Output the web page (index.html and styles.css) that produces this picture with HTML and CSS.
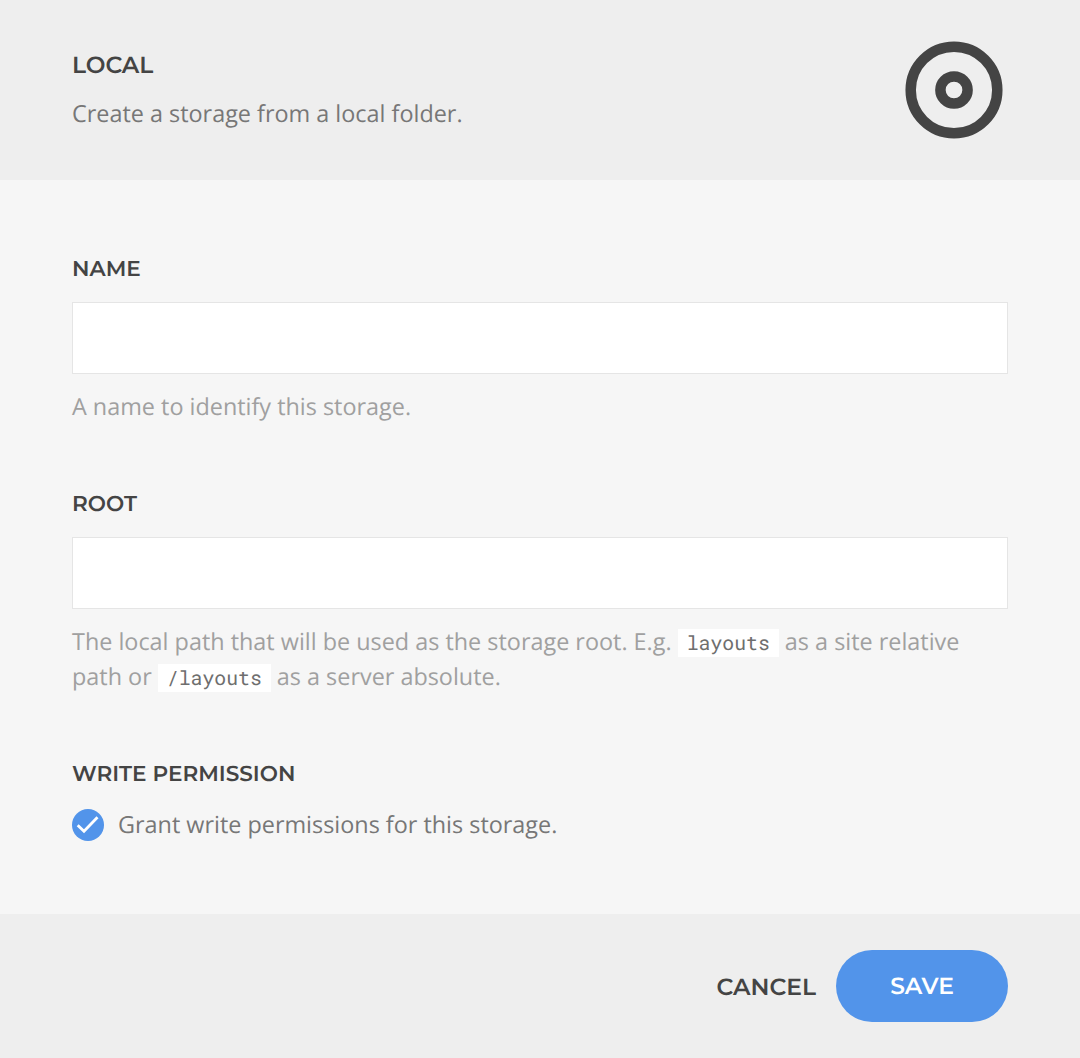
FILE: index.html
```html
<!DOCTYPE html>
<html lang="en">
<head>
<meta charset="utf-8">
<title>Local storage</title>
<link rel="stylesheet" href="styles.css">
</head>
<body>
<form class="dialog">
  <header class="header">
    <div>
      <h1 class="title">LOCAL</h1>
      <p class="subtitle">Create a storage from a local folder.</p>
    </div>
    <svg class="logo" viewBox="0 0 98 98" fill="none" stroke="#444" stroke-width="10.5"><circle cx="49" cy="49" r="43.3"/><circle cx="49" cy="49" r="13.6"/></svg>
  </header>
  <main class="body">
    <section class="field">
      <label class="label" for="name">NAME</label>
      <input class="input" id="name" type="text">
      <p class="help">A name to identify this storage.</p>
    </section>
    <section class="field">
      <label class="label" for="root">ROOT</label>
      <input class="input" id="root" type="text">
      <p class="help">The local path that will be used as the storage root. E.g. <code>layouts</code> as a site relative<br>path or <code>/layouts</code> as a server absolute.</p>
    </section>
    <section class="field">
      <span class="label">WRITE PERMISSION</span>
      <div class="check">
        <svg class="tick" viewBox="0 0 32 32"><circle cx="16" cy="16" r="16" fill="#5294ea"/><path d="M5.7 16.2 12 22.2 25.5 8.3" fill="none" stroke="#fff" stroke-width="2.8"/></svg>
        <span>Grant write permissions for this storage.</span>
      </div>
    </section>
  </main>
  <footer class="footer">
    <button class="cancel" type="button">CANCEL</button>
    <button class="save" type="button">SAVE</button>
  </footer>
</form>
</body>
</html>
```

FILE: styles.css
```css
* { box-sizing: border-box; }
body { margin: 0; background: #f6f6f6; color: #777; font: 23.4px/35px "Open Sans", sans-serif; text-rendering: geometricPrecision; }
h1, p { margin: 0; }
.dialog { height: 1058px; display: flex; flex-direction: column; }
.header { height: 180px; padding: 0 77px 0 72px; background: #eee; display: flex; align-items: center; justify-content: space-between; }
.title, .label, .cancel, .save { font-family: Montserrat, "Inter", sans-serif; font-weight: 600; color: #444; }
.title { font-size: 23.4px; line-height: 34px; margin-bottom: 14px; }
.subtitle { line-height: 35px; padding-bottom: 2px; }
.logo { width: 98px; height: 98px; }
.body { flex: 1; padding: 72px 72px 0; }
.field { margin-bottom: 63px; }
.label { display: block; font-size: 21.6px; line-height: 34px; margin-bottom: 16px; }
.input { display: block; width: 100%; height: 72px; border: 1px solid #e5e5e5; background: #fff; padding: 0 20px; font: inherit; }
.help { color: #a0a0a0; margin-top: 15px; }
code { font: 19.8px/26px "Roboto Mono", "DejaVu Sans Mono", monospace; color: #6e6e6e; background: #fff; padding: 1px 9px; }
.check { display: flex; align-items: center; gap: 14px; }
.tick { width: 32px; height: 32px; }
.footer { height: 144px; padding: 0 72px; background: #eee; display: flex; align-items: center; justify-content: flex-end; gap: 20px; }
.cancel, .save { border: 0; font-size: 23.4px; font-weight: 600; padding: 1px 0 0; background: none; text-rendering: inherit; }
.save { width: 172px; height: 72px; border-radius: 36px; background: #5294ea; color: #fff; padding: 0 0 2px; }
```
